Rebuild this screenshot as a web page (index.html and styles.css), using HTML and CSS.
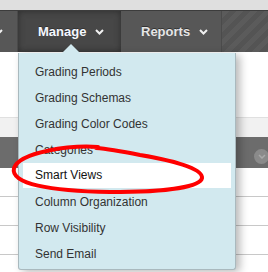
FILE: index.html
```html
<!DOCTYPE html>
<html lang="en">
<head>
    <meta charset="UTF-8">
    <title>Grade Center - Manage</title>
    <link rel="stylesheet" href="styles.css">
</head>
<body>
    <div class="top-strip"></div>

    <div class="nav">
        <div class="tab tab-edge">
            <svg class="chev" width="9" height="6" viewBox="0 0 9 6"><polyline points="1,1 4.5,4.5 8,1" /></svg>
        </div>
        <div class="tab tab-active">
            Manage
            <svg class="chev" width="9" height="6" viewBox="0 0 9 6"><polyline points="1,1 4.5,4.5 8,1" /></svg>
        </div>
        <div class="tab">
            Reports
            <svg class="chev" width="9" height="6" viewBox="0 0 9 6"><polyline points="1,1 4.5,4.5 8,1" /></svg>
        </div>
        <div class="tab-fill"></div>
    </div>

    <div class="page">
        <div class="blank"></div>
        <div class="subbar"></div>
        <div class="headbar">
            <span class="circle-btn">
                <svg width="8" height="5" viewBox="0 0 8 5"><polyline points="1,1 4,4 7,1" /></svg>
            </span>
        </div>
        <div class="row"></div>
        <div class="row"></div>
        <div class="row"></div>
    </div>

    <div class="dropdown">
        <span class="arrow"></span>
        <ul class="menu">
            <li>Grading Periods</li>
            <li>Grading Schemas</li>
            <li>Grading Color Codes</li>
            <li>Categories</li>
            <li class="active">Smart Views</li>
            <li>Column Organization</li>
            <li>Row Visibility</li>
            <li>Send Email</li>
        </ul>
    </div>

    <!-- hand drawn marker round the highlighted item -->
    <svg class="marker" width="268" height="272" viewBox="0 0 268 272">
        <path d="M98 147 C 70 145, 20 152, 14 168 C 10 184, 50 191, 110 192 C 160 192, 200 188, 202 178 C 203 168, 170 160, 140 155 C 125 152, 110 149, 96 148" />
    </svg>
</body>
</html>
```

FILE: styles.css
```css
* {
    box-sizing: border-box;
    margin: 0;
    padding: 0;
}

body {
    width: 268px;
    height: 272px;
    overflow: hidden;
    position: relative;
    background: #fff;
    font-family: 'Liberation Sans', Arial, sans-serif;
}

.top-strip {
    height: 10px;
    background: #dfdfdf;
}

.nav {
    display: flex;
    height: 42px;
    background: #575757;
    border-top: 1px solid #3c3c3c;
}

.tab {
    display: flex;
    align-items: center;
    gap: 9px;
    width: 100px;
    padding-left: 20px;
    color: #e6e6e6;
    font-size: 13px;
    font-weight: bold;
    text-shadow: 0 -1px 0 #333;
    background: #575757;
}

.tab .chev polyline {
    fill: none;
    stroke: #f0f0f0;
    stroke-width: 2;
}

.tab-edge {
    width: 18px;
    padding-left: 0;
    border-right: 1px solid #4a4a4a;
}

.tab-edge .chev {
    margin-left: -6px;
}

.tab-active {
    width: 103px;
    padding-left: 20px;
    color: #f6f8ff;
    background: #474747;
    box-shadow: inset 0 0 6px #2c2c2c;
}

.tab-fill {
    flex: 1;
    border-left: 1px solid #4b4b4b;
    background: repeating-linear-gradient(135deg, #5b5b5b 0 5px, #545454 5px 10px);
}

.blank {
    height: 65px;
}

.subbar {
    height: 20px;
    background: #f1f1f1;
    border-top: 1px solid #e0e0e0;
}

.headbar {
    height: 31px;
    background: #6c6c6c;
    display: flex;
    justify-content: flex-end;
    align-items: center;
}

.circle-btn {
    display: flex;
    align-items: center;
    justify-content: center;
    width: 15px;
    height: 15px;
    margin-top: 8px;
    border-radius: 50%;
    background: #8a8a8a;
    transform: translateX(1px);
}

.circle-btn polyline {
    fill: none;
    stroke: #a9a9a9;
    stroke-width: 1.5;
}

.row {
    height: 29px;
    border-bottom: 1px solid #c8c8c8;
}

.dropdown {
    position: absolute;
    left: 18px;
    top: 53px;
    width: 218px;
    height: 217px;
    background: #d2e9ef;
    border: 1px solid #a9b9be;
    border-top: none;
    border-radius: 0 0 3px 3px;
    box-shadow: 4px 2px 8px rgba(0, 0, 0, 0.28);
    padding: 6px 4px 0 4px;
}

.arrow {
    position: absolute;
    top: -9px;
    left: 43px;
    width: 0;
    height: 0;
    border-left: 9px solid transparent;
    border-right: 9px solid transparent;
    border-bottom: 9px solid #d2e9ef;
}

.menu {
    list-style: none;
}

.menu li {
    height: 26px;
    line-height: 26px;
    padding-left: 12px;
    font-size: 12px;
    color: #333;
}

.menu li.active {
    background: #fff;
    color: #111;
    height: 25px;
    line-height: 25px;
    margin-bottom: 1px;
}

.marker {
    position: absolute;
    left: 0;
    top: 0;
}

.marker path {
    fill: none;
    stroke: #ff0000;
    stroke-width: 4;
    stroke-linecap: round;
}
```
